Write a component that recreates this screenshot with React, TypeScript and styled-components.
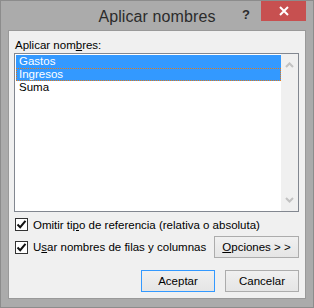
import styled, { createGlobalStyle } from "styled-components";

const GlobalStyle = createGlobalStyle`
  html, body {
    margin: 0;
    padding: 0;
    background: #ababab;
  }
  * {
    box-sizing: border-box;
  }
`;

const items = [
  { name: "Gastos", selected: true, focused: false },
  { name: "Ingresos", selected: true, focused: true },
  { name: "Suma", selected: false, focused: false },
];

const Check = () => (
  <svg width="11" height="11" viewBox="0 0 11 11">
    <path d="M1.5 5.5 L4.2 8.2 L9.5 1.8" fill="none" stroke="#111" strokeWidth="2" />
  </svg>
);

const App = () => {
  return (
    <>
      <GlobalStyle />
      <Window>
        <TitleBar>
          <span />
          <Title>Aplicar nombres</Title>
          <Controls>
            <Help>?</Help>
            <Close>
              <svg width="10" height="10" viewBox="0 0 10 10">
                <path d="M1 1 L9 9 M9 1 L1 9" stroke="#fff" strokeWidth="2" />
              </svg>
            </Close>
          </Controls>
        </TitleBar>
        <Body>
          <Label>
            Aplicar nom<u>b</u>res:
          </Label>
          <ListBox>
            <Items>
              {items.map((it) => (
                <Item key={it.name} $selected={it.selected} $focused={it.focused}>
                  {it.name}
                </Item>
              ))}
            </Items>
            <ScrollBar>
              <Arrow viewBox="0 0 9 6">
                <path d="M1 5 L4.5 1.5 L8 5" fill="none" stroke="#c2c2c2" strokeWidth="2" />
              </Arrow>
              <Arrow viewBox="0 0 9 6">
                <path d="M1 1 L4.5 4.5 L8 1" fill="none" stroke="#c2c2c2" strokeWidth="2" />
              </Arrow>
            </ScrollBar>
          </ListBox>
          <OptionRow $top={6}>
            <CheckLabel>
              <Box>
                <Check />
              </Box>
              <span>
                Omitir ti<u>p</u>o de referencia (relativa o absoluta)
              </span>
            </CheckLabel>
          </OptionRow>
          <OptionRow $top={5}>
            <CheckLabel>
              <Box>
                <Check />
              </Box>
              <span>
                U<u>s</u>ar nombres de filas y columnas
              </span>
            </CheckLabel>
            <Button $wide>
              <u>O</u>pciones &gt; &gt;
            </Button>
          </OptionRow>
          <Footer>
            <Button $primary>Aceptar</Button>
            <Button>Cancelar</Button>
          </Footer>
        </Body>
      </Window>
    </>
  );
};

const Window = styled.div`
  width: 314px;
  height: 308px;
  background: #ababab;
  border: 1px solid #8c8c8c;
  display: flex;
  flex-direction: column;
  padding: 0 7px 8px 7px;
  font-family: "Liberation Sans", Arial, sans-serif;
  font-size: 11.5px;
  color: #000;
`;

const TitleBar = styled.div`
  height: 30px;
  display: grid;
  grid-template-columns: 1fr auto 1fr;
  align-items: start;
`;

const Title = styled.div`
  font-size: 16px;
  color: #2b2b2b;
  padding-top: 7px;
  letter-spacing: 0.1px;
`;

const Controls = styled.div`
  justify-self: end;
  display: flex;
  align-items: flex-start;
  gap: 11px;
`;

const Help = styled.div`
  font-weight: bold;
  font-size: 13px;
  color: #2b2b2b;
  padding-top: 6px;
`;

const Close = styled.div`
  width: 45px;
  height: 20px;
  background: #c75050;
  display: flex;
  align-items: center;
  justify-content: center;
`;

const Body = styled.div`
  flex: 1;
  background: #f0f0f0;
  border: 1px solid #999;
  display: flex;
  flex-direction: column;
  padding: 6px 6px 6px 5px;
`;

const Label = styled.div`
  line-height: 14px;
  margin-left: 1px;
  padding-top: 1px;
  margin-bottom: -1px;
`;

const ListBox = styled.div`
  margin-top: 2px;
  height: 159px;
  border: 1px solid #828790;
  background: #fff;
  display: flex;
`;

const Items = styled.div`
  flex: 1;
  padding: 1px 0 0 1px;
`;

const Item = styled.div<{ $selected: boolean; $focused: boolean }>`
  height: 13px;
  background: ${(p) => (p.$selected ? "#3399ff" : "transparent")};
  color: ${(p) => (p.$selected ? "#fff" : "#000")};
  border: 1px dotted ${(p) => (p.$focused ? "#e07a1a" : "transparent")};
  border-width: ${(p) => (p.$focused ? "1px" : "0")};
  padding-left: ${(p) => (p.$focused ? "2px" : "3px")};
  line-height: ${(p) => (p.$focused ? "11px" : "13px")};
`;

const ScrollBar = styled.div`
  width: 17px;
  background: #f0f0f0;
  display: flex;
  flex-direction: column;
  justify-content: space-between;
  align-items: center;
  padding: 8px 0 8px;
`;

const Arrow = styled.svg`
  width: 9px;
  height: 6px;
`;

const OptionRow = styled.div<{ $top: number }>`
  margin-top: ${(p) => p.$top}px;
  display: flex;
  align-items: center;
  justify-content: space-between;
  min-height: 13px;
`;

const CheckLabel = styled.label`
  display: flex;
  align-items: center;
  gap: 5px;
  margin-left: 1px;
  white-space: nowrap;
`;

const Box = styled.span`
  width: 13px;
  height: 13px;
  flex: none;
  border: 1px solid #333;
  background: #fff;
  display: flex;
  align-items: center;
  justify-content: center;
`;

const Button = styled.button<{ $primary?: boolean; $wide?: boolean }>`
  width: ${(p) => (p.$wide ? "85px" : "74px")};
  height: 22px;
  flex: none;
  font-family: inherit;
  font-size: 11.5px;
  color: #000;
  background: linear-gradient(#f0f0f0, #e5e5e5);
  border: 1px solid ${(p) => (p.$primary ? "#3399ff" : "#acacac")};
  padding: 0;
`;

const Footer = styled.div`
  margin-top: 12px;
  display: flex;
  justify-content: flex-end;
  gap: 10px;
`;

export default App;
